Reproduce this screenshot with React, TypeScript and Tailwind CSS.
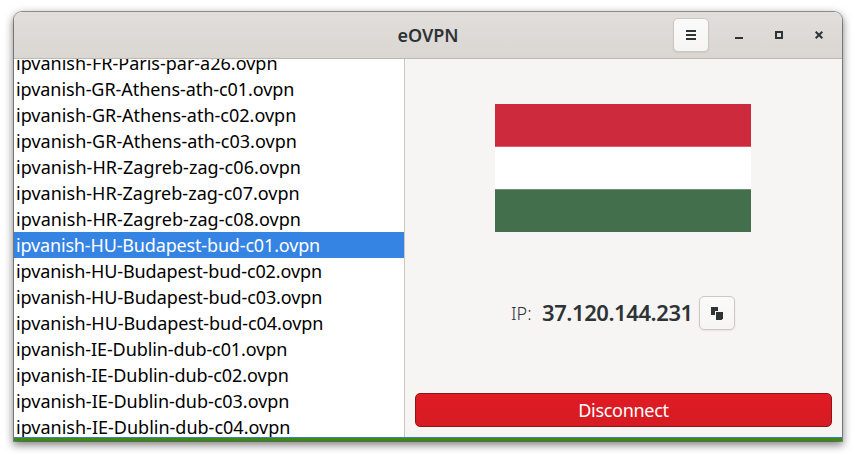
import type { ReactNode } from "react";

const configs = [
  { name: "ipvanish-FR-Paris-par-a26.ovpn", tracking: "tracking-[0px]" },
  { name: "ipvanish-GR-Athens-ath-c01.ovpn", tracking: "tracking-[-0.06px]" },
  { name: "ipvanish-GR-Athens-ath-c02.ovpn", tracking: "tracking-[0px]" },
  { name: "ipvanish-GR-Athens-ath-c03.ovpn", tracking: "tracking-[0.02px]" },
  { name: "ipvanish-HR-Zagreb-zag-c06.ovpn", tracking: "tracking-[0.06px]" },
  { name: "ipvanish-HR-Zagreb-zag-c07.ovpn", tracking: "tracking-[0.02px]" },
  { name: "ipvanish-HR-Zagreb-zag-c08.ovpn", tracking: "tracking-[0.06px]" },
  { name: "ipvanish-HU-Budapest-bud-c01.ovpn", tracking: "tracking-[-0.16px]" },
  { name: "ipvanish-HU-Budapest-bud-c02.ovpn", tracking: "tracking-[-0.1px]" },
  { name: "ipvanish-HU-Budapest-bud-c03.ovpn", tracking: "tracking-[-0.09px]" },
  { name: "ipvanish-HU-Budapest-bud-c04.ovpn", tracking: "tracking-[-0.06px]" },
  { name: "ipvanish-IE-Dublin-dub-c01.ovpn", tracking: "tracking-[-0.1px]" },
  { name: "ipvanish-IE-Dublin-dub-c02.ovpn", tracking: "tracking-[-0.05px]" },
  { name: "ipvanish-IE-Dublin-dub-c03.ovpn", tracking: "tracking-[-0.03px]" },
  { name: "ipvanish-IE-Dublin-dub-c04.ovpn", tracking: "tracking-[0px]" },
];

const selected = "ipvanish-HU-Budapest-bud-c01.ovpn";

function IconButton({ label, children }: { label: string; children: ReactNode }) {
  return (
    <button
      aria-label={label}
      className="flex h-[34px] w-9 shrink-0 items-center justify-center rounded-[5px] border border-[#cdc7c2] bg-linear-to-b from-[#fbfafa] to-[#f6f5f4] text-[#2e3436] shadow-[0_1px_2px_rgba(0,0,0,0.07)]"
    >
      {children}
    </button>
  );
}

function WindowButton({ label, children }: { label: string; children: ReactNode }) {
  return (
    <button aria-label={label} className="flex h-8 w-10 items-center justify-center text-[#2e3436]">
      <svg width="8" height="8" viewBox="0 0 8 8" fill="none" stroke="currentColor" strokeWidth="2">
        {children}
      </svg>
    </button>
  );
}

function HeaderBar() {
  return (
    <header className="grid h-[47px] shrink-0 grid-cols-[1fr_auto_1fr] items-center border-b border-[#bfb8b1] bg-linear-to-b from-[#e1dedb] to-[#dad6d2]">
      <div />
      <h1 className="text-[18px] leading-6 font-semibold tracking-[-0.05px] text-[#2e3436]">eOVPN</h1>
      <div className="flex items-center justify-end pr-[3px]">
        <IconButton label="Menu">
          <svg width="10" height="10" viewBox="0 0 10 10" fill="currentColor">
            <path d="M0 0h10v2H0zM0 4h10v2H0zM0 8h10v2H0z" />
          </svg>
        </IconButton>
        <div className="ml-[10px] flex">
          <WindowButton label="Minimize">
            <path d="M0 7h8" />
          </WindowButton>
          <WindowButton label="Maximize">
            <path d="M1 1h6v6H1z" />
          </WindowButton>
          <WindowButton label="Close">
            <path d="M.7.7l6.6 6.6M7.3.7L.7 7.3" />
          </WindowButton>
        </div>
      </div>
    </header>
  );
}

function ConfigList() {
  return (
    <ul className="flex w-[391px] shrink-0 flex-col justify-end overflow-hidden border-r border-[#cdc7c2] bg-white">
      {configs.map(({ name, tracking }) => (
        <li
          key={name}
          className={`h-[26px] shrink-0 pl-[2px] text-[18px] leading-[26px] whitespace-nowrap ${tracking} ${
            name === selected ? "bg-[#3584e4] text-white" : "text-black"
          }`}
        >
          <span>{name}</span>
        </li>
      ))}
      <li className="-mb-[5px] h-0.5 shrink-0" />
    </ul>
  );
}

function HungarianFlag() {
  return (
    <svg width="256" height="128" viewBox="0 0 256 128" className="shrink-0">
      <path fill="#fff" d="M0 0h256v128H0z" />
      <path fill="#cd2a3e" d="M0 0h256v42.67H0z" />
      <path fill="#436f4d" d="M0 85.33h256V128H0z" />
    </svg>
  );
}

function StatusPanel() {
  return (
    <main className="flex grow flex-col px-[10px] pt-[45px] pb-[10px]">
      <div className="flex flex-col items-center pr-px">
        <HungarianFlag />
        <div className="mt-16 flex h-[34px] items-center text-[#2e3436]">
          <span className="w-[31px] text-[18px] font-light">IP:</span>
          <span className="w-[157px] pb-0.5 text-[22px] font-semibold tracking-[-0.42px]">37.120.144.231</span>
          <IconButton label="Copy IP address">
            <svg width="12" height="13" viewBox="0 0 12 13" fill="currentColor">
              <path d="M0 0h7v4H4v4H0z" />
              <path d="M5 5h7v6.5L10.500 13H5z" />
            </svg>
          </IconButton>
        </div>
      </div>
      <button className="mt-auto h-[34px] w-full rounded-[5px] border border-[#8e141a] bg-linear-to-b from-[#e01b24] to-[#d61b23] text-[18px] leading-8 tracking-[-0.3px] text-white">
        Disconnect
      </button>
    </main>
  );
}

export default function App() {
  return (
    <div className="h-[458px] w-[856px] overflow-hidden bg-white pt-3 pl-[14px] font-['Noto_Sans',sans-serif]">
      <div className="flex h-[429px] w-[828px] flex-col overflow-hidden rounded-t-[8px] bg-[#f6f5f4] shadow-[0_0_0_1px_rgba(0,0,0,0.36),0_3px_9px_1px_rgba(0,0,0,0.5)]">
        <HeaderBar />
        <div className="flex min-h-0 grow">
          <ConfigList />
          <StatusPanel />
        </div>
        <div className="h-1 shrink-0 border-t border-[#3584c8] bg-[#3c8a0e]" />
      </div>
    </div>
  );
}
